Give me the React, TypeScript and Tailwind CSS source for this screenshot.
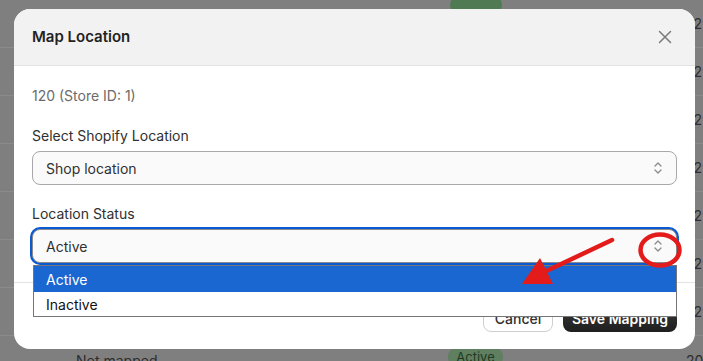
import React from 'react';

const rows = [
  { badge: true, date: '2' },
  { badge: false, date: '2' },
  { badge: false, date: '2' },
  { badge: false, date: '2' },
  { badge: false, date: '2' },
  { badge: false, date: '2' },
  { badge: false, date: '2' },
];

const UpDown: React.FC = () => (
  <svg width="10" height="14" viewBox="0 0 10 14" fill="none" stroke="#8a8a8a" strokeWidth={1.3} strokeLinecap="round" strokeLinejoin="round">
    <path d="M2 5 L5 2 L8 5" />
    <path d="M2 9 L5 12 L8 9" />
  </svg>
);

const App: React.FC = () => {
  return (
    <div className="relative w-[703px] h-[361px] overflow-hidden bg-[#7f7f7f]" style={{ fontFamily: 'Inter, "Noto Sans", sans-serif' }}>
      {/* Dimmed table behind the modal */}
      <div className="flex flex-col">
        {rows.map((r, i) => (
          <div key={i} className="h-[48px] border-b border-[#8b8b8b] flex items-center text-[14px] text-[#2d2d2d]">
            <div className="w-[450px]" />
            <div className="w-[52px]">
              {r.badge && <div className="h-[18px] -mt-[28px] rounded-full bg-[#4f7a52]" />}
            </div>
            <div className="flex-1 text-right pr-[1px]">{r.date}</div>
          </div>
        ))}
        <div className="h-[48px] flex items-start pt-[14px] text-[14px] text-[#2d2d2d]">
          <div className="w-[76px] shrink-0" />
          <div className="w-[372px] shrink-0">Not mapped</div>
          <div className="w-[55px] shrink-0 h-[22px] rounded-full bg-[#5f7f60] text-[#1f3a22] text-[13px] leading-[22px] text-center -mt-[4px]">Active</div>
          <div className="w-[183px] shrink-0" />
          <div className="shrink-0 whitespace-nowrap">2025-1</div>
        </div>
      </div>

      {/* Modal */}
      <div className="absolute left-[14px] top-[9px] w-[681px] h-[340px] rounded-[16px] bg-white overflow-hidden flex flex-col">
        <div className="h-[57px] shrink-0 bg-[#f2f2f2] border-b border-[#e1e1e1] flex items-center justify-between px-[18px]">
          <span className="text-[15px] font-semibold text-[#222]">Map Location</span>
          <svg width="14" height="14" viewBox="0 0 14 14" stroke="#7a7a7a" strokeWidth={1.5} strokeLinecap="round" className="mr-[5px]">
            <path d="M1.5 1.5 L12.5 12.5 M12.5 1.5 L1.5 12.5" />
          </svg>
        </div>

        <div className="relative px-[18px] pt-[20px] pb-[19px] border-b border-[#e3e3e3] flex flex-col">
          <div className="text-[14px] leading-[20px] text-[#6b6b6b]">120 (Store ID: 1)</div>
          <div className="mt-[20px] text-[14px] leading-[20px] text-[#303030]">Select Shopify Location</div>
          <div className="mt-[5px] h-[34px] rounded-[8px] border border-[#a8a8a8] bg-[#fafafa] flex items-center justify-between pl-[13px] pr-[13px] text-[14px] text-[#303030]">
            <span>Shop location</span>
            <UpDown />
          </div>
          <div className="mt-[19px] text-[14px] leading-[20px] text-[#303030]">Location Status</div>
          <div className="mt-[5px] h-[34px] rounded-[8px] border border-[#8a8a8a] bg-[#fafafa] ring-2 ring-[#0a5ad4] flex items-center justify-between pl-[13px] pr-[13px] text-[14px] text-[#303030]">
            <span>Active</span>
            <UpDown />
          </div>
        </div>

        <div className="flex justify-end gap-[10px] pt-[22px] px-[18px]">
          <div className="h-[27px] w-[70px] rounded-[8px] border border-[#cfcfcf] bg-white flex items-center justify-center text-[14px] font-medium text-[#303030]">Cancel</div>
          <div className="h-[27px] w-[114px] rounded-[8px] bg-gradient-to-b from-[#3a3a3a] to-[#1f1f1f] flex items-center justify-center text-[14px] font-semibold text-white">Save Mapping</div>
        </div>

        {/* Native dropdown list */}
        <div className="absolute left-[19px] top-[256px] w-[644px] border border-[#767676] bg-white text-[14px]">
          <div className="h-[26px] bg-[#1a67d2] text-white flex items-center pl-[12px]">Active</div>
          <div className="h-[24px] text-[#111] flex items-center pl-[12px]">Inactive</div>
        </div>
      </div>

      {/* Annotation */}
      <svg className="absolute left-0 top-0 pointer-events-none" width="703" height="361" viewBox="0 0 703 361">
        <ellipse cx="660" cy="250" rx="19.5" ry="15.5" fill="none" stroke="#e31b1b" strokeWidth={4.5} />
        <line x1="612" y1="240" x2="540" y2="274" stroke="#e31b1b" strokeWidth={4.5} strokeLinecap="round" />
        <polygon points="522,284 540,258 553,284" fill="#e31b1b" />
      </svg>
    </div>
  );
};

export default App;
